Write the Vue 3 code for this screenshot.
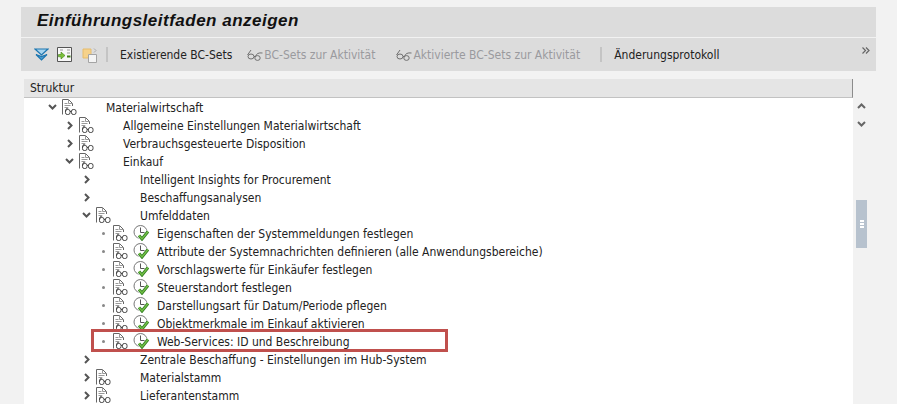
<script setup>
const rows = [
  { level: 0, toggle: 'open', doc: true, text: 'Materialwirtschaft' },
  { level: 1, toggle: 'closed', doc: true, text: 'Allgemeine Einstellungen Materialwirtschaft' },
  { level: 1, toggle: 'closed', doc: true, text: 'Verbrauchsgesteuerte Disposition' },
  { level: 1, toggle: 'open', doc: true, text: 'Einkauf' },
  { level: 2, toggle: 'closed', text: 'Intelligent Insights for Procurement' },
  { level: 2, toggle: 'closed', text: 'Beschaffungsanalysen' },
  { level: 2, toggle: 'open', doc: true, text: 'Umfelddaten' },
  { level: 3, toggle: 'leaf', doc: true, clock: true, text: 'Eigenschaften der Systemmeldungen festlegen' },
  { level: 3, toggle: 'leaf', doc: true, clock: true, text: 'Attribute der Systemnachrichten definieren (alle Anwendungsbereiche)' },
  { level: 3, toggle: 'leaf', doc: true, clock: true, text: 'Vorschlagswerte für Einkäufer festlegen' },
  { level: 3, toggle: 'leaf', doc: true, clock: true, text: 'Steuerstandort festlegen' },
  { level: 3, toggle: 'leaf', doc: true, clock: true, text: 'Darstellungsart für Datum/Periode pflegen' },
  { level: 3, toggle: 'leaf', doc: true, clock: true, text: 'Objektmerkmale im Einkauf aktivieren' },
  { level: 3, toggle: 'leaf', doc: true, clock: true, text: 'Web-Services: ID und Beschreibung', marked: true },
  { level: 2, toggle: 'closed', text: 'Zentrale Beschaffung - Einstellungen im Hub-System' },
  { level: 2, toggle: 'closed', doc: true, text: 'Materialstamm' },
  { level: 2, toggle: 'closed', doc: true, text: 'Lieferantenstamm' },
]
</script>

<template>
  <div class="page">
    <header class="title-bar">
      <h1>Einführungsleitfaden anzeigen</h1>
    </header>

    <div class="toolbar">
      <svg class="tool-icon" width="15" height="13" viewBox="0 0 15 13">
        <path d="M1 1h13L7.500 7z" fill="#a6d4f0" stroke="#1d76b0" stroke-width="1.200" />
        <path d="M2 6.500 7.500 12 13 6.500 7.500 8.500z" fill="#4d9fd3" stroke="#1d76b0" stroke-width="1.200" />
      </svg>
      <svg class="tool-icon wide" width="16" height="15" viewBox="0 0 16 15">
        <path d="M.5.500h14v14H.500z" fill="#f8f8f8" stroke="#555" />
        <path d="M3 3h3M10 3h3M10 6h3" stroke="#999" />
        <path d="M1.500 7.500h2.500V5l4 3.500-4 3.500V9.800H1.500z" fill="#7cc23a" stroke="#3f7f16" stroke-width=".6" />
        <path d="M10 9.500h3.500" stroke="#3f7f16" stroke-width="2" />
      </svg>
      <svg class="tool-icon" width="16" height="16" viewBox="0 0 16 16">
        <path d="M1 2h8v9H1z" fill="#f6d28a" stroke="#e6bc6c" />
        <path d="M6.500 7.500h8v8h-8z" fill="#f4f4f4" stroke="#a4a4a4" />
        <path d="M12 1.500l2 2-2 2" fill="none" stroke="#aaa" />
      </svg>
      <span class="sep"></span>
      <span class="tool-text">Existierende BC-Sets</span>
      <span class="tool-off first-off">
        <svg width="17" height="12" viewBox="0 0 17 12">
          <path d="M1.500 6 5 1M8 7.500h1.500M9.500 7.500c1-3 3-4 7-3.500" fill="none" stroke="#707070" />
          <ellipse cx="5" cy="7.500" rx="3" ry="2.500" fill="none" stroke="#707070" />
          <ellipse cx="11.500" cy="9" rx="2.700" ry="2.400" fill="none" stroke="#707070" />
        </svg>
        BC-Sets zur Aktivität
      </span>
      <span class="tool-off second-off">
        <svg width="17" height="12" viewBox="0 0 17 12">
          <path d="M1.500 6 5 1M8 7.500h1.500M9.500 7.500c1-3 3-4 7-3.500" fill="none" stroke="#707070" />
          <ellipse cx="5" cy="7.500" rx="3" ry="2.500" fill="none" stroke="#707070" />
          <ellipse cx="11.500" cy="9" rx="2.700" ry="2.400" fill="none" stroke="#707070" />
        </svg>
        Aktivierte BC-Sets zur Aktivität
      </span>
      <span class="sep second-sep"></span>
      <span class="tool-text">Änderungsprotokoll</span>
      <svg class="more" width="8" height="7" viewBox="0 0 8 7">
        <path d="M.5.500 3.500 3.500.5 6.500M4 .500 7 3.500 4 6.500" fill="none" stroke="#666" stroke-width="1.200" />
      </svg>
    </div>

    <div class="content">
      <section class="tree">
        <div class="tree-head">Struktur</div>
        <div
          v-for="row in rows"
          :key="row.text"
          class="row"
          :style="{ paddingLeft: `${22 + row.level * 17}px` }"
        >
          <span class="toggle">
            <svg v-if="row.toggle === 'open'" width="9" height="6" viewBox="0 0 9 6">
              <path d="M1 1l3.500 3.500L8 1" fill="none" stroke="#555" stroke-width="2" />
            </svg>
            <svg v-else-if="row.toggle === 'closed'" width="6" height="9" viewBox="0 0 6 9">
              <path d="M1 1l3.500 3.500L1 8" fill="none" stroke="#555" stroke-width="2" />
            </svg>
            <span v-else class="dot"></span>
          </span>
          <span class="doc-slot">
            <svg v-if="row.doc" width="16" height="16" viewBox="0 0 16 16">
              <path d="M1.500 15.500V.500h6l4 4V7" fill="#fff" stroke="#666" />
              <path d="M7.500.500v4h4M3.500 4.500h3M3.500 6.500h6M3.500 8.500h3" fill="none" stroke="#999" />
              <rect x="4.500" y="10.500" width="4.500" height="5" rx="1.800" fill="#fff" stroke="#444" />
              <rect x="10.500" y="10.500" width="4.500" height="5" rx="1.800" fill="#fff" stroke="#444" />
              <path d="M4.500 13c0-2.500.8-4 2.800-4M9 12.500h1.500" fill="none" stroke="#444" />
            </svg>
          </span>
          <span class="aux-slot">
            <svg v-if="row.clock" width="17" height="16" viewBox="0 0 17 16">
              <circle cx="7.500" cy="7" r="6.500" fill="#fff" stroke="#777" />
              <path d="M7.500 2.500v5h4.500" fill="none" stroke="#555" />
              <path d="M6 10.500l3 3.500 6-7.500" fill="none" stroke="#fff" stroke-width="4.400" />
              <path d="M6 10.500l3 3.500 6-7.500" fill="none" stroke="#2f7d20" stroke-width="3" />
              <path d="M6 10.500l3 3.500 6-7.500" fill="none" stroke="#74c046" stroke-width="1.400" />
            </svg>
          </span>
          <span class="label">{{ row.text }}</span>
          <span v-if="row.marked" class="marker"></span>
        </div>
      </section>

      <aside class="scroll">
        <svg width="9" height="6" viewBox="0 0 9 6">
          <path d="M1 5l3.500-3.500L8 5" fill="none" stroke="#666" stroke-width="2" />
        </svg>
        <svg class="down" width="9" height="6" viewBox="0 0 9 6">
          <path d="M1 1l3.500 3.500L8 1" fill="none" stroke="#666" stroke-width="2" />
        </svg>
        <div class="thumb"><i></i><i></i><i></i></div>
      </aside>
    </div>
  </div>
</template>

<style>
html,
body {
  margin: 0;
  background: #f2f2f2;
  overflow: hidden;
}
</style>

<style scoped>
.page {
  width: 897px;
  height: 404px;
  overflow: hidden;
  padding-top: 7px;
  box-sizing: border-box;
  font-family: "DejaVu Sans Condensed", "DejaVu Sans", sans-serif;
  font-stretch: condensed;
  font-size: 12px;
  color: #222;
}

.title-bar {
  margin: 0 21px;
  height: 30px;
  box-sizing: border-box;
  padding: 0 0 3px 16px;
  background: #dcdcdc;
  display: flex;
  align-items: center;
}

h1 {
  margin: 0;
  font: italic bold 17px "Liberation Sans", sans-serif;
  letter-spacing: 0.5px;
  color: #111;
}

.toolbar {
  position: relative;
  margin: 1px 21px 0;
  height: 33px;
  background: #dcdcdc;
  display: flex;
  align-items: center;
  padding-left: 13px;
}

.tool-icon {
  margin-right: 8px;
}

.tool-icon.wide {
  margin-right: 9px;
}

.sep {
  width: 2px;
  height: 15px;
  background: #c4c4c4;
  margin-right: 12px;
}

.second-sep {
  margin-left: 20px;
}

.tool-off {
  display: flex;
  align-items: center;
  gap: 1px;
  color: #9a9a9e;
}

.first-off {
  margin-left: 14px;
}

.second-off {
  margin-left: 20px;
}

.more {
  position: absolute;
  right: 6px;
  top: 9px;
}

.content {
  display: flex;
  margin: 8px 0 0 24px;
}

.tree {
  width: 829px;
  background: #fff;
}

.tree-head {
  height: 18px;
  line-height: 19px;
  background: #e5e5e5;
  border-bottom: 1px solid #c2c2c2;
  border-right: 1px solid #8c8c8c;
  padding-left: 6px;
}

.row {
  position: relative;
  height: 18px;
  display: flex;
  align-items: center;
  white-space: nowrap;
}

.label {
  padding-top: 2px;
}

.toggle {
  width: 13px;
  margin-right: 2px;
  display: flex;
  justify-content: center;
}

.dot {
  width: 3px;
  height: 3px;
  border-radius: 50%;
  background: #888;
}

.doc-slot {
  width: 17px;
  height: 16px;
}

.aux-slot {
  width: 28px;
  height: 16px;
  padding-left: 4px;
  box-sizing: border-box;
}

.row svg {
  display: block;
}

.marker {
  position: absolute;
  left: 67px;
  top: -3px;
  width: 351px;
  height: 17px;
  border: 3px solid #c0504d;
}

.scroll {
  position: relative;
  width: 20px;
  padding-top: 24px;
  padding-left: 4px;
  box-sizing: border-box;
}

.scroll svg {
  display: block;
}

.scroll .down {
  margin-top: 12px;
}

.thumb {
  position: absolute;
  left: 3px;
  top: 121px;
  width: 11px;
  height: 48px;
  background: #b7c2ce;
  display: flex;
  flex-direction: column;
  align-items: center;
  justify-content: center;
  gap: 1px;
}

.thumb i {
  width: 4px;
  height: 2px;
  background: #fff;
}
</style>
